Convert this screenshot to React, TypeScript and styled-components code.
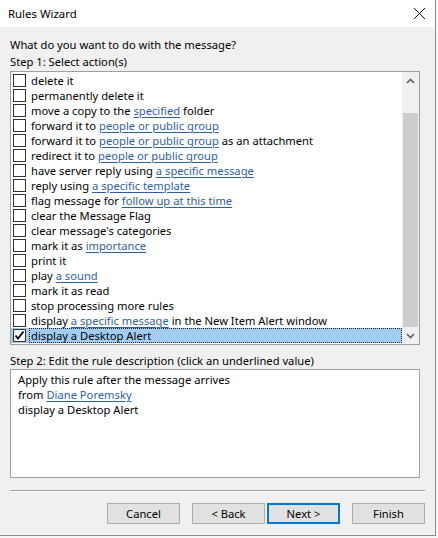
import React from "react";
import styled, { createGlobalStyle } from "styled-components";

const Global = createGlobalStyle`
  html, body { margin: 0; padding: 0; background: #f7f7f7; }
  body { font-family: "Segoe UI", "Noto Sans", "Open Sans", sans-serif; font-size: 11.2px; color: #000; }
  * { box-sizing: border-box; }
`;

const Window = styled.div`
  width: 436px;
  height: 536px;
  background: #f0f0f0;
  border-right: 1px solid #8c8c8c;
  border-bottom: 1px solid #8c8c8c;
  display: flex;
  flex-direction: column;
`;

const TitleBar = styled.div`
  height: 27px;
  background: #fff;
  display: flex;
  align-items: center;
  justify-content: space-between;
  padding: 0 9px 0 8px;
  font-size: 11.4px;
`;

const Body = styled.div`
  padding: 10px 15px 0 10px;
  display: flex;
  flex-direction: column;
  flex: 1;
`;

const Label = styled.div<{ $mt?: number }>`
  line-height: 16px;
  height: 16px;
  margin-top: ${(p) => p.$mt ?? 0}px;
  white-space: nowrap;
`;

const ListBox = styled.div`
  margin-top: 1px;
  width: 410px;
  height: 274px;
  border: 1px solid #a0a0a0;
  background: #fff;
  display: flex;
`;

const Rows = styled.div`
  flex: 1;
  padding-top: 1px;
  display: flex;
  flex-direction: column;
`;

const Row = styled.div<{ $sel?: boolean }>`
  height: 15px;
  display: flex;
  align-items: center;
  padding-left: 2px;
  background: ${(p) => (p.$sel ? "#a3cdf0" : "transparent")};
  white-space: nowrap;
`;

const Check = styled.span`
  width: 13px;
  height: 13px;
  border: 1px solid #333;
  background: #fff;
  display: inline-flex;
  align-items: center;
  justify-content: center;
  flex: none;
`;

const RowText = styled.span<{ $focus?: boolean }>`
  margin-left: 3px;
  padding-left: 2px;
  flex: 1;
  height: 15px;
  line-height: 15px;
  outline: ${(p) => (p.$focus ? "1px dotted #222" : "none")};
  outline-offset: -1px;
`;

const Link = styled.span`
  color: #2f5fa3;
  text-decoration: underline;
  text-underline-offset: 2px;
`;

const ScrollBar = styled.div`
  width: 17px;
  background: #f0f0f0;
  display: flex;
  flex-direction: column;
`;

const ArrowBtn = styled.div`
  height: 17px;
  display: flex;
  align-items: center;
  justify-content: center;
`;

const Track = styled.div<{ $h: number }>`
  height: ${(p) => p.$h}px;
`;

const Thumb = styled.div`
  flex: 1;
  background: #cdcdcd;
  margin: 0 1px;
`;

const DescBox = styled.div`
  width: 410px;
  height: 109px;
  border: 1px solid #a0a0a0;
  background: #fff;
  padding: 2px 7px;
  line-height: 15px;
`;

const Separator = styled.div`
  margin-top: 12px;
  width: 415px;
  border-top: 1px solid #a0a0a0;
  border-bottom: 1px solid #fff;
`;

const ButtonRow = styled.div`
  margin-top: 11px;
  width: 415px;
  display: flex;
  justify-content: flex-end;
`;

const Button = styled.div<{ $gap?: number; $default?: boolean }>`
  width: 73px;
  height: 21px;
  margin-left: ${(p) => p.$gap ?? 0}px;
  background: #e1e1e1;
  border: ${(p) => (p.$default ? "2px solid #0078d7" : "1px solid #adadad")};
  display: flex;
  align-items: center;
  justify-content: center;
`;

type Part = string | { link: string };
const items: Part[][] = [
  ["delete it"],
  ["permanently delete it"],
  ["move a copy to the ", { link: "specified" }, " folder"],
  ["forward it to ", { link: "people or public group" }],
  ["forward it to ", { link: "people or public group" }, " as an attachment"],
  ["redirect it to ", { link: "people or public group" }],
  ["have server reply using ", { link: "a specific message" }],
  ["reply using ", { link: "a specific template" }],
  ["flag message for ", { link: "follow up at this time" }],
  ["clear the Message Flag"],
  ["clear message's categories"],
  ["mark it as ", { link: "importance" }],
  ["print it"],
  ["play ", { link: "a sound" }],
  ["mark it as read"],
  ["stop processing more rules"],
  ["display ", { link: "a specific message" }, " in the New Item Alert window"],
  ["display a Desktop Alert"],
];

const render = (parts: Part[]) =>
  parts.map((p, i) =>
    typeof p === "string" ? <React.Fragment key={i}>{p}</React.Fragment> : <Link key={i}>{p.link}</Link>
  );

const Chevron = ({ up }: { up?: boolean }) => (
  <svg width="9" height="6" viewBox="0 0 9 6">
    <path d={up ? "M1 5 L4.5 1.5 L8 5" : "M1 1 L4.5 4.5 L8 1"} fill="none" stroke="#606060" strokeWidth="1.6" />
  </svg>
);

export default function App() {
  return (
    <>
      <Global />
      <Window>
        <TitleBar>
          <span>Rules Wizard</span>
          <svg width="13" height="13" viewBox="0 0 13 13">
            <path d="M1 1 L12 12 M12 1 L1 12" stroke="#111" strokeWidth="1" />
          </svg>
        </TitleBar>
        <Body>
          <Label>What do you want to do with the message?</Label>
          <Label $mt={1}>Step 1: Select action(s)</Label>
          <ListBox>
            <Rows>
              {items.map((parts, i) => {
                const sel = i === items.length - 1;
                return (
                  <Row key={i} $sel={sel}>
                    <Check>
                      {sel && (
                        <svg width="11" height="11" viewBox="0 0 11 11">
                          <path d="M1.5 5.5 L4 8.5 L9.5 1.5" fill="none" stroke="#000" strokeWidth="1.8" />
                        </svg>
                      )}
                    </Check>
                    <RowText $focus={sel}>{render(parts)}</RowText>
                  </Row>
                );
              })}
            </Rows>
            <ScrollBar>
              <ArrowBtn>
                <Chevron up />
              </ArrowBtn>
              <Track $h={24} />
              <Thumb />
              <ArrowBtn>
                <Chevron />
              </ArrowBtn>
            </ScrollBar>
          </ListBox>
          <Label $mt={8}>Step 2: Edit the rule description (click an underlined value)</Label>
          <DescBox>
            <div>Apply this rule after the message arrives</div>
            <div>
              from <Link>Diane Poremsky</Link>
            </div>
            <div>display a Desktop Alert</div>
          </DescBox>
          <Separator />
          <ButtonRow>
            <Button>Cancel</Button>
            <Button $gap={12}>&lt; Back</Button>
            <Button $gap={2} $default>
              Next &gt;
            </Button>
            <Button $gap={12}>Finish</Button>
          </ButtonRow>
        </Body>
      </Window>
    </>
  );
}
